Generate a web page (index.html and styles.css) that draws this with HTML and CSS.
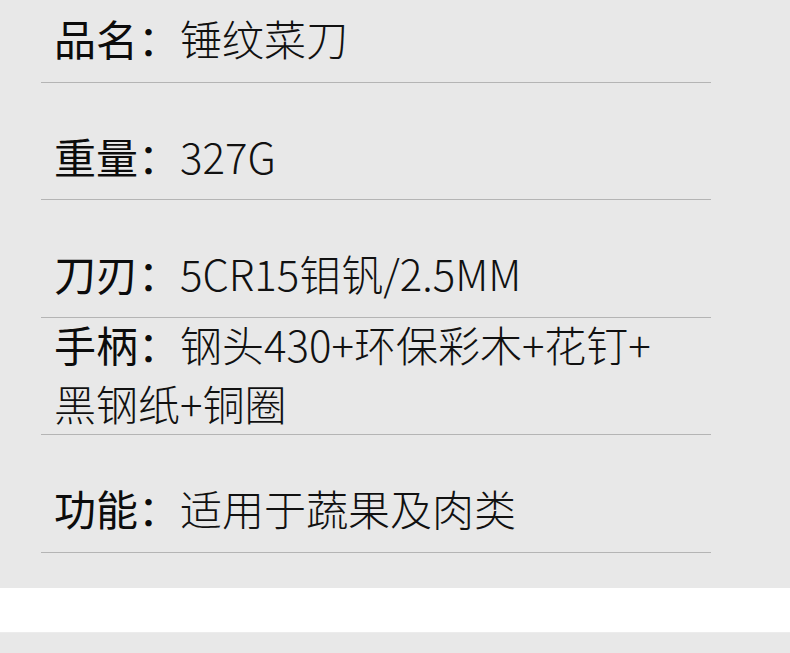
FILE: index.html
```html
<!DOCTYPE html>
<html>
<head>
    <meta charset="utf-8">
    <title>锤纹菜刀 参数</title>
    <link rel="stylesheet" href="styles.css">
</head>
<body>
    <div class="specs">
        <dl class="specRow">
            <dt>品名：</dt><dd>锤纹菜刀</dd>
        </dl>
        <dl class="specRow">
            <dt>重量：</dt><dd>327G</dd>
        </dl>
        <dl class="specRow">
            <dt>刀刃：</dt><dd>5CR15钼钒/2.5MM</dd>
        </dl>
        <dl class="specRow twoLine">
            <div class="wrapText"><dt>手柄：</dt><dd>钢头430+环保彩木+花钉+<br>黑钢纸+铜圈</dd></div>
        </dl>
        <dl class="specRow">
            <dt>功能：</dt><dd>适用于蔬果及肉类</dd>
        </dl>
    </div>
    <div class="gap"></div>
    <div class="nextBlock"></div>
</body>
</html>
```

FILE: styles.css
```css
body {
    margin: 0;
    padding: 0;
    background: #fff;
    font-family: "Noto Sans CJK SC", "Noto Sans", sans-serif;
    color: #111;
}

.specs {
    background: #e8e8e8;
    margin-top: -35px;
    padding: 0 79px 35.5px 41px;
}

.specRow {
    margin: 0;
    height: 116.5px;
    padding: 0 0 0 13px;
    border-bottom: 1px solid #b4b4b4;
    font-size: 42px;
    line-height: 59px;
    box-sizing: content-box;
}
.specRow dt,
.specRow dd {
    display: inline;
    margin: 0;
}
.specRow dt {
    font-weight: 400;
    color: #0c0c0c;
}
.specRow dd {
    font-weight: 300;
}
.specRow:not(.twoLine) {
    display: flex;
    align-items: flex-start;
}
.specRow:not(.twoLine) > dt,
.specRow:not(.twoLine) > dd {
    margin-top: 43px;
}
.twoLine {
    display: flow-root;
}
.wrapText {
    margin-top: -4px;
}

.gap {
    height: 44px;
    background: #fff;
}
.nextBlock {
    height: 30px;
    background: #e8e8e8;
    border-top: 1px solid #ececec;
}
```
